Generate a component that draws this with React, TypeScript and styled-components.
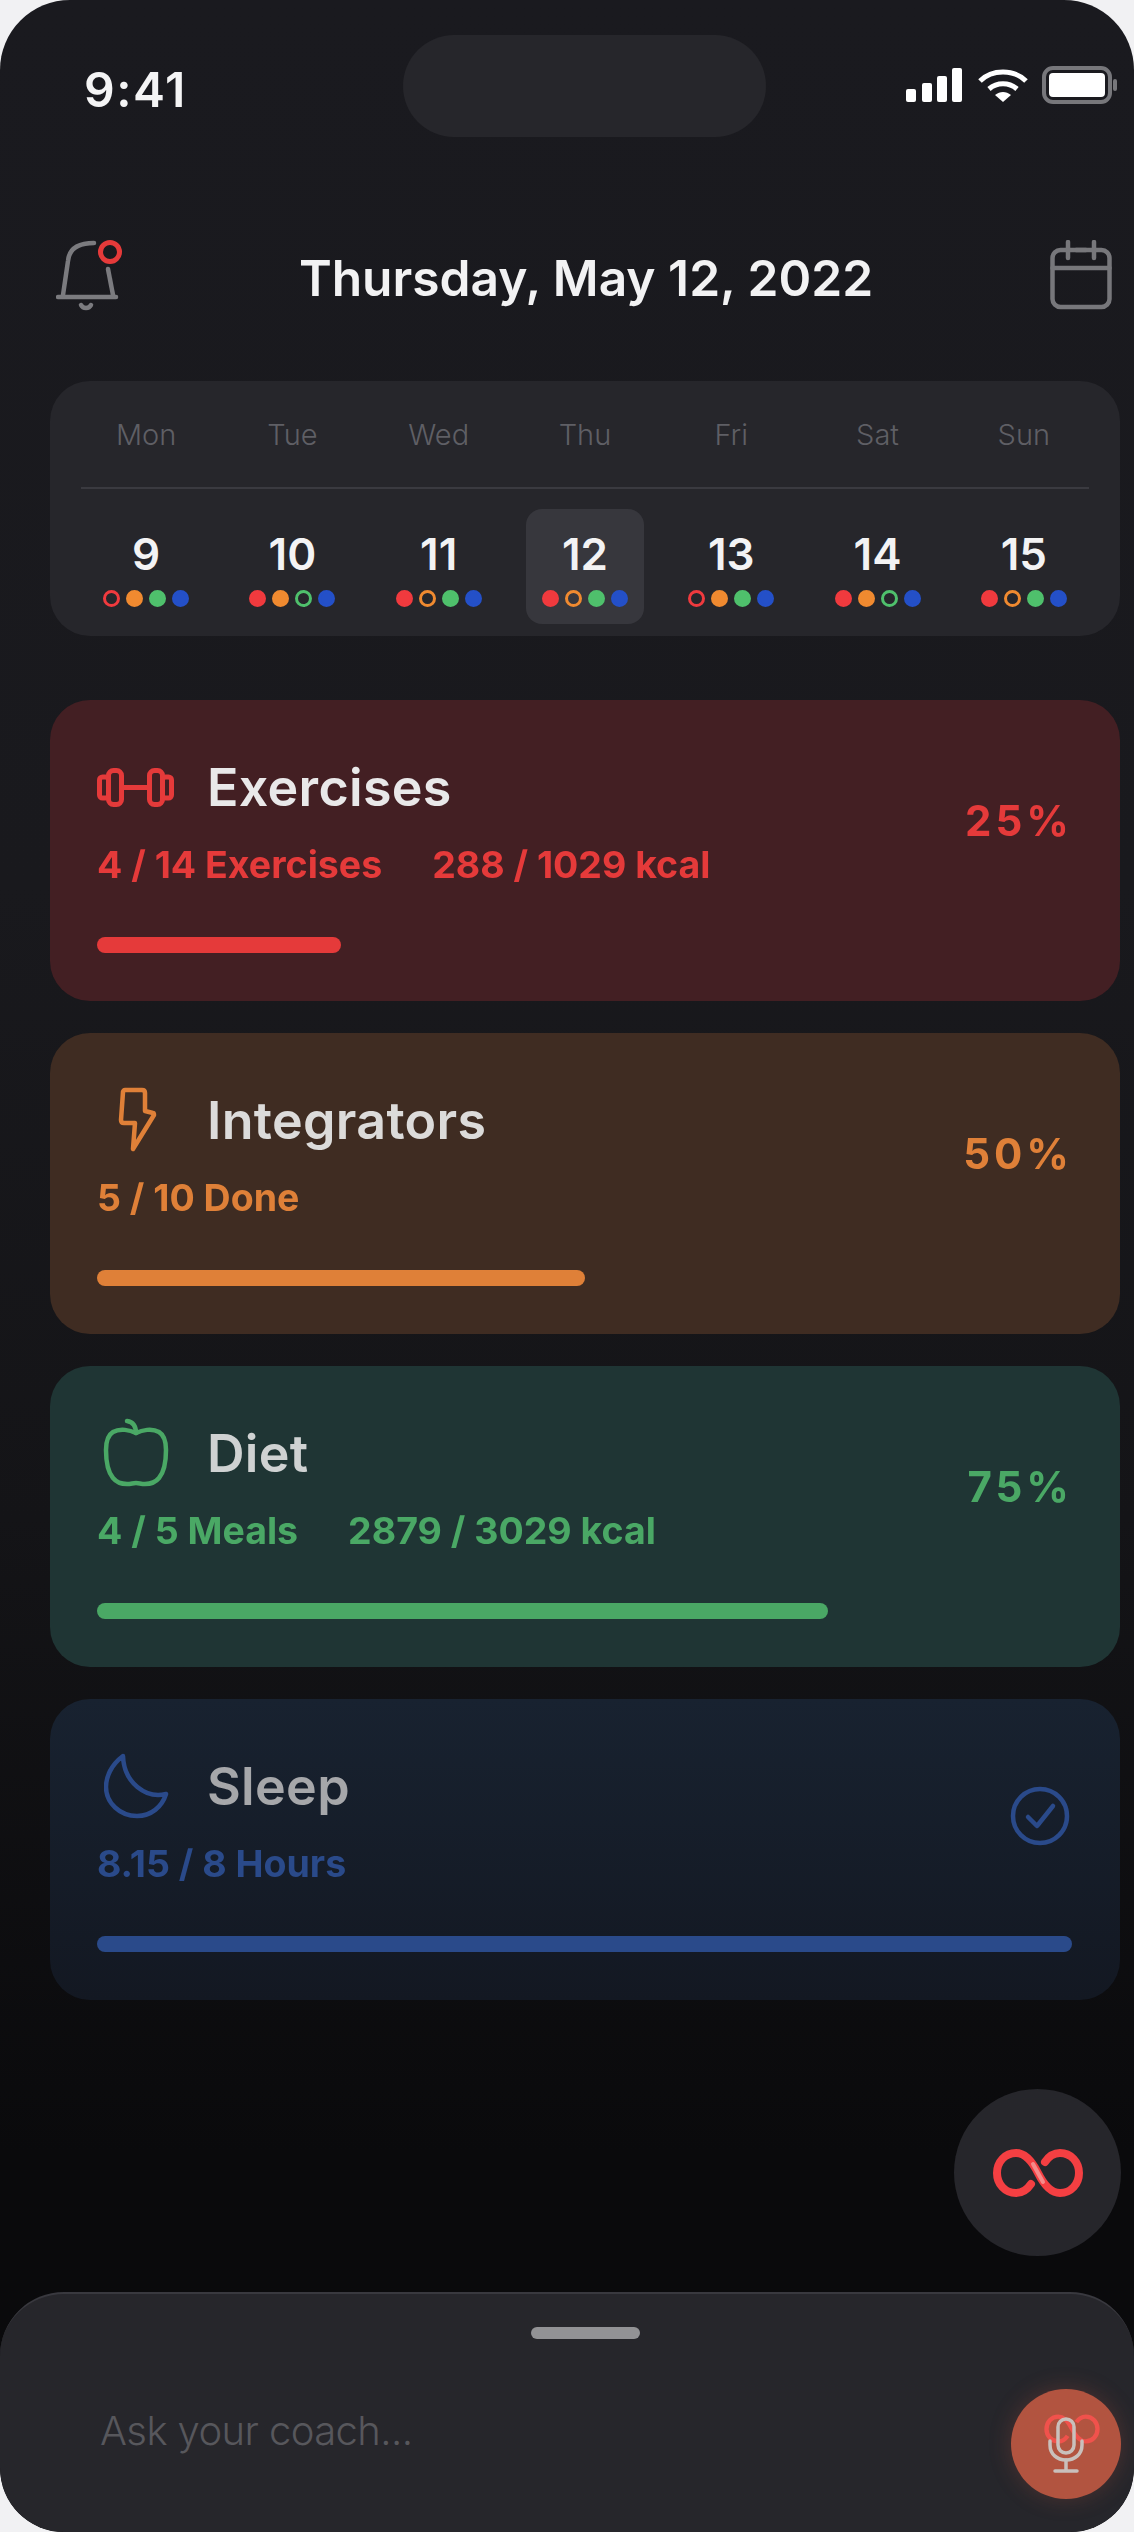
import styled, { createGlobalStyle } from 'styled-components';

const RED = '#e53a3a';
const ORANGE = '#df8038';
const GREEN = '#4aa865';
const BLUE = '#2a4a8a';

const GlobalStyle = createGlobalStyle`
  html, body {
    margin: 0;
    padding: 0;
    background: #f1f1f3;
  }
  * {
    box-sizing: border-box;
  }
`;

const weekDays = [
  { name: 'Mon', date: 9, hollow: 0 },
  { name: 'Tue', date: 10, hollow: 2 },
  { name: 'Wed', date: 11, hollow: 1 },
  { name: 'Thu', date: 12, hollow: 1, selected: true },
  { name: 'Fri', date: 13, hollow: 0 },
  { name: 'Sat', date: 14, hollow: 2 },
  { name: 'Sun', date: 15, hollow: 1 },
];

const dotColors = ['#f03a3e', '#f08a30', '#4fc06c', '#2450c8'];

const DumbbellIcon = () => (
  <svg width="77" height="39" viewBox="0 0 77 39" fill="none" stroke={RED} strokeWidth="5">
    <rect x="2.5" y="9" width="9" height="21" rx="3" />
    <rect x="11.5" y="2.5" width="13" height="34" rx="5" />
    <rect x="52.5" y="2.5" width="13" height="34" rx="5" />
    <rect x="65.5" y="9" width="9" height="21" rx="3" />
    <path d="M25 19.5h27" />
  </svg>
);

const BoltIcon = () => (
  <svg width="40" height="66" viewBox="0 0 40 66" fill="none" stroke={ORANGE} strokeWidth="4.5" strokeLinejoin="round">
    <path d="M7 3h17c2 0 3 1 3 3v18l8 2c1 0 1 1 1 2L15 62l2-26H6c-2 0-3-1-3-3L5 5c0-1 1-2 2-2z" />
  </svg>
);

const AppleIcon = () => (
  <svg width="66" height="70" viewBox="0 0 66 70" fill="none" stroke={GREEN} strokeWidth="4.5" strokeLinecap="round">
    <path d="M33 15C27 12 17 10 10 14 5 17 3 23 3 32c0 12 2 22 7 28 4 5 9 6 14 6 4 0 6-1 9-1s5 1 9 1c5 0 10-1 14-6 5-6 7-16 7-28 0-9-2-15-7-18-7-4-17-2-23 1z" />
    <path d="M24 3c6 1 9 5 9 12" />
  </svg>
);

const MoonIcon = () => (
  <svg width="66" height="66" viewBox="0 0 66 66" fill="none" stroke={BLUE} strokeWidth="4.5" strokeLinejoin="round">
    <path d="M19 3C7 12 2 24 2 34c0 16 14 29 31 29 14 0 25-9 29-22-20 5-42-11-43-38z" />
  </svg>
);

const CheckCircleIcon = () => (
  <svg width="60" height="60" viewBox="0 0 60 60" fill="none" stroke={BLUE} strokeWidth="4.5" strokeLinecap="round" strokeLinejoin="round">
    <circle cx="30" cy="30" r="27" />
    <path d="M18 31l9 9 16-20" />
  </svg>
);

const InfinityPath = () => (
  <path d="M38 35C34 41 29 44 23 44 12 44 4 35 4 24 4 13 12 4 23 4c10 0 17 10 22 20s12 20 22 20c11 0 19-9 19-20S78 4 67 4c-6 0-11 3-15 9" />
);

const App = () => {
  return (
    <>
      <GlobalStyle />
      <Phone>
        <StatusBar>
          <Clock>9:41</Clock>
          <Island />
          <StatusIcons>
            <svg width="58" height="36" viewBox="0 0 58 36" fill="#fff">
              <rect x="0" y="22" width="10" height="13" rx="2" />
              <rect x="16" y="16" width="10" height="19" rx="2" />
              <rect x="31" y="9" width="10" height="26" rx="2" />
              <rect x="46" y="1" width="10" height="34" rx="2" />
            </svg>
            <svg width="50" height="36" viewBox="0 0 50 36" fill="none" stroke="#fff" strokeWidth="5">
              <path d="M2 14C14 2 36 2 48 14" />
              <path d="M11 22c8-7 20-7 28 0" />
              <path d="M25 35l-8-7c5-4 11-4 16 0z" fill="#fff" stroke="none" />
            </svg>
            <svg width="76" height="38" viewBox="0 0 76 38" fill="none">
              <rect x="2" y="2" width="66" height="34" rx="9" stroke="#77777b" strokeWidth="4" />
              <rect x="7" y="7" width="56" height="24" rx="4" fill="#fff" />
              <rect x="71" y="13" width="4" height="12" rx="2" fill="#77777b" />
            </svg>
          </StatusIcons>
        </StatusBar>

        <Header>
          <svg width="66" height="72" viewBox="0 0 66 72" fill="none" stroke="#7b7b7f" strokeWidth="4.5" strokeLinecap="round">
            <path d="M2 58h58" />
            <path d="M7 56l5-34C13 10 22 4 38 4" />
            <path d="M52 30l5 26" />
            <path d="M25 66c2 4 8 4 10 0" />
            <circle cx="54" cy="13" r="9.5" stroke={RED} strokeWidth="5" />
          </svg>
          <DateTitle>Thursday, May 12, 2022</DateTitle>
          <svg width="62" height="70" viewBox="0 0 62 70" fill="none" stroke="#77777b" strokeWidth="4.5" strokeLinecap="round">
            <rect x="2.5" y="10" width="57" height="57" rx="8" />
            <path d="M2.5 28h57" />
            <path d="M18 2v16M44 2v16M26 10h10" />
          </svg>
        </Header>

        <CalendarCard>
          <WeekRow>
            {weekDays.map((day) => (
              <WeekName key={day.name}>{day.name}</WeekName>
            ))}
          </WeekRow>
          <CalendarDivider />
          <WeekRow>
            {weekDays.map((day) => (
              <DayCell key={day.date} $selected={day.selected}>
                <DayNumber>{day.date}</DayNumber>
                <DotRow>
                  {dotColors.map((color, i) => (
                    <Dot key={color} $color={color} $hollow={day.hollow === i} />
                  ))}
                </DotRow>
              </DayCell>
            ))}
          </WeekRow>
        </CalendarCard>

        <CardList>
          <ProgressCard $bg="#431f23">
            <CardTop>
              <div>
                <TitleRow>
                  <IconSlot>
                    <DumbbellIcon />
                  </IconSlot>
                  <CardTitle $color="#e9e8e9">Exercises</CardTitle>
                </TitleRow>
                <SubRow $color={RED}>
                  <span>4 / 14 Exercises</span>
                  <span>288 / 1029 kcal</span>
                </SubRow>
              </div>
              <Percent $color={RED}>25%</Percent>
            </CardTop>
            <Bar $color={RED} $width={25} />
          </ProgressCard>

          <ProgressCard $bg="#3f2c22">
            <CardTop>
              <div>
                <TitleRow>
                  <IconSlot $offset={21}>
                    <BoltIcon />
                  </IconSlot>
                  <CardTitle $color="#dcdbda">Integrators</CardTitle>
                </TitleRow>
                <SubRow $color={ORANGE}>
                  <span>5 / 10 Done</span>
                </SubRow>
              </div>
              <Percent $color={ORANGE}>50%</Percent>
            </CardTop>
            <Bar $color={ORANGE} $width={50} />
          </ProgressCard>

          <ProgressCard $bg="#1f3534">
            <CardTop>
              <div>
                <TitleRow>
                  <IconSlot $offset={6}>
                    <AppleIcon />
                  </IconSlot>
                  <CardTitle $color="#cfd2d2">Diet</CardTitle>
                </TitleRow>
                <SubRow $color={GREEN}>
                  <span>4 / 5 Meals</span>
                  <span>2879 / 3029 kcal</span>
                </SubRow>
              </div>
              <Percent $color={GREEN}>75%</Percent>
            </CardTop>
            <Bar $color={GREEN} $width={75} />
          </ProgressCard>

          <ProgressCard $bg="linear-gradient(180deg, #182230 0%, #131822 100%)">
            <CardTop>
              <div>
                <TitleRow>
                  <IconSlot $offset={7}>
                    <MoonIcon />
                  </IconSlot>
                  <CardTitle $color="#a6a7aa">Sleep</CardTitle>
                </TitleRow>
                <SubRow $color={BLUE}>
                  <span>8.15 / 8 Hours</span>
                </SubRow>
              </div>
              <CheckCircleIcon />
            </CardTop>
            <Bar $color={BLUE} $width={100} />
          </ProgressCard>
        </CardList>

        <CoachFab>
          <svg width="90" height="48" viewBox="0 0 90 48" fill="none" stroke="#f43f42" strokeWidth="8" strokeLinecap="round">
            <InfinityPath />
            <path d="M40 15L50 33" stroke="#f58a8a" strokeWidth="4" />
          </svg>
        </CoachFab>

        <BottomSheet>
          <SheetHandle />
          <InputRow>
            <AskText>Ask your coach...</AskText>
            <MicButton>
              <MicGhost width="56" height="30" viewBox="0 0 90 48" fill="none" stroke="#f0524c" strokeWidth="7">
                <InfinityPath />
              </MicGhost>
              <MicGlyph width="36" height="56" viewBox="0 0 36 56" fill="none" stroke="#c9c0bc" strokeWidth="3.5" strokeLinecap="round">
                <rect x="10" y="2" width="16" height="34" rx="8" />
                <path d="M2 24v4c0 9 7 15 16 15s16-6 16-15v-4" />
                <path d="M18 43v10M7 54h22" />
              </MicGlyph>
            </MicButton>
          </InputRow>
        </BottomSheet>
      </Phone>
    </>
  );
};

const Phone = styled.div`
  width: 1134px;
  height: 2532px;
  display: flex;
  flex-direction: column;
  overflow: hidden;
  border-radius: 70px 70px 64px 64px;
  background: linear-gradient(180deg, #1a1a1f 0%, #19191d 35%, #141417 60%, #0a0a0c 85%, #0a0a0c 100%);
  font-family: Inter, 'Liberation Sans', sans-serif;
  filter: blur(0.6px);
`;

const StatusBar = styled.div`
  display: flex;
  align-items: center;
  flex: none;
  height: 102px;
  margin-top: 35px;
  padding: 0 16px 0 84px;
`;

const Clock = styled.div`
  width: 102px;
  padding-top: 8px;
  color: #f4f4f5;
  font-size: 48px;
  line-height: 60px;
  font-weight: 600;
  letter-spacing: 1.5px;
`;

const Island = styled.div`
  width: 363px;
  height: 102px;
  margin-left: 217px;
  border-radius: 51px;
  background: #26262b;
`;

const StatusIcons = styled.div`
  display: flex;
  align-items: center;
  gap: 14px;
  margin-left: auto;
  margin-top: -2px;
`;

const Header = styled.div`
  display: flex;
  align-items: center;
  justify-content: space-between;
  flex: none;
  height: 72px;
  margin-top: 102px;
  padding: 0 22px 0 56px;
`;

const DateTitle = styled.div`
  padding-top: 5px;
  color: #f2f2f3;
  font-size: 49.7px;
  font-weight: 600;
  white-space: nowrap;
`;

const CalendarCard = styled.div`
  flex: none;
  height: 255px;
  margin: 70px 14px 0 50px;
  padding: 26px 23px 0;
  border-radius: 40px;
  background: #26262b;
`;

const WeekRow = styled.div`
  display: grid;
  grid-template-columns: repeat(7, 1fr);
  justify-items: center;
`;

const WeekName = styled.div`
  color: #5f5f65;
  font-size: 29px;
  line-height: 56px;
  font-weight: 300;
`;

const CalendarDivider = styled.div`
  height: 2px;
  margin: 24px 8px 20px;
  background: #3a3a40;
`;

const DayCell = styled.div<{ $selected?: boolean }>`
  display: flex;
  flex-direction: column;
  align-items: center;
  width: 118px;
  height: 115px;
  padding-top: 21px;
  border-radius: 16px;
  background: ${(p) => (p.$selected ? '#37373d' : 'transparent')};
`;

const DayNumber = styled.div`
  color: #f3f3f4;
  font-size: 44px;
  line-height: 48px;
  font-weight: 600;
`;

const DotRow = styled.div`
  display: flex;
  gap: 6px;
  margin-top: 12px;
`;

const Dot = styled.div<{ $color: string; $hollow?: boolean }>`
  width: 17px;
  height: 17px;
  border-radius: 50%;
  border: 3px solid ${(p) => p.$color};
  background: ${(p) => (p.$hollow ? 'transparent' : p.$color)};
`;

const CardList = styled.div`
  display: flex;
  flex-direction: column;
  flex: none;
  gap: 32px;
  margin: 64px 14px 0 50px;
`;

const ProgressCard = styled.div<{ $bg: string }>`
  height: 301px;
  padding: 51px 48px 0 47px;
  border-radius: 40px;
  background: ${(p) => p.$bg};
`;

const CardTop = styled.div`
  display: flex;
  align-items: center;
  justify-content: space-between;
  padding-right: 2px;
`;

const TitleRow = styled.div`
  display: flex;
  align-items: center;
  height: 72px;
`;

const IconSlot = styled.div<{ $offset?: number }>`
  display: flex;
  align-items: center;
  width: 110px;
  padding-left: ${(p) => p.$offset ?? 0}px;
`;

const CardTitle = styled.div<{ $color: string }>`
  color: ${(p) => p.$color};
  font-size: 52px;
  font-weight: 600;
  letter-spacing: 0.3px;
`;

const SubRow = styled.div<{ $color: string }>`
  display: flex;
  gap: 50px;
  margin-top: 24px;
  color: ${(p) => p.$color};
  font-size: 37.5px;
  line-height: 36px;
  font-weight: 700;
`;

const Percent = styled.div<{ $color: string }>`
  margin: 6px -3px 0 0;
  color: ${(p) => p.$color};
  font-size: 42px;
  font-weight: 700;
  letter-spacing: 4px;
`;

const Bar = styled.div<{ $color: string; $width: number }>`
  width: ${(p) => p.$width}%;
  height: 16px;
  margin-top: 54px;
  border-radius: 8px;
  background: ${(p) => p.$color};
`;

const CoachFab = styled.div`
  display: flex;
  align-items: center;
  justify-content: center;
  align-self: flex-end;
  flex: none;
  width: 167px;
  height: 167px;
  margin: auto 13px 0 0;
  border-radius: 50%;
  background: #26262b;
`;

const BottomSheet = styled.div`
  flex: none;
  height: 240px;
  margin-top: 36px;
  padding-top: 33px;
  border-top: 2px solid #39393f;
  border-radius: 64px;
  background: #26262b;
`;

const SheetHandle = styled.div`
  width: 109px;
  height: 12px;
  margin-left: 531px;
  border-radius: 6px;
  background: #929295;
`;

const InputRow = styled.div`
  display: flex;
  align-items: center;
  justify-content: space-between;
  margin-top: 50px;
  padding: 0 13px 0 100px;
`;

const AskText = styled.div`
  margin-bottom: 28px;
  color: #57575c;
  font-size: 40px;
  font-weight: 300;
  letter-spacing: -0.6px;
`;

const MicButton = styled.div`
  position: relative;
  width: 110px;
  height: 110px;
  border-radius: 50%;
  background: #b25440;
  box-shadow: 0 0 22px rgba(178, 84, 64, 0.28);
`;

const MicGhost = styled.svg`
  position: absolute;
  left: 33px;
  top: 25px;
`;

const MicGlyph = styled.svg`
  position: absolute;
  left: 37px;
  top: 28px;
`;

export default App;
